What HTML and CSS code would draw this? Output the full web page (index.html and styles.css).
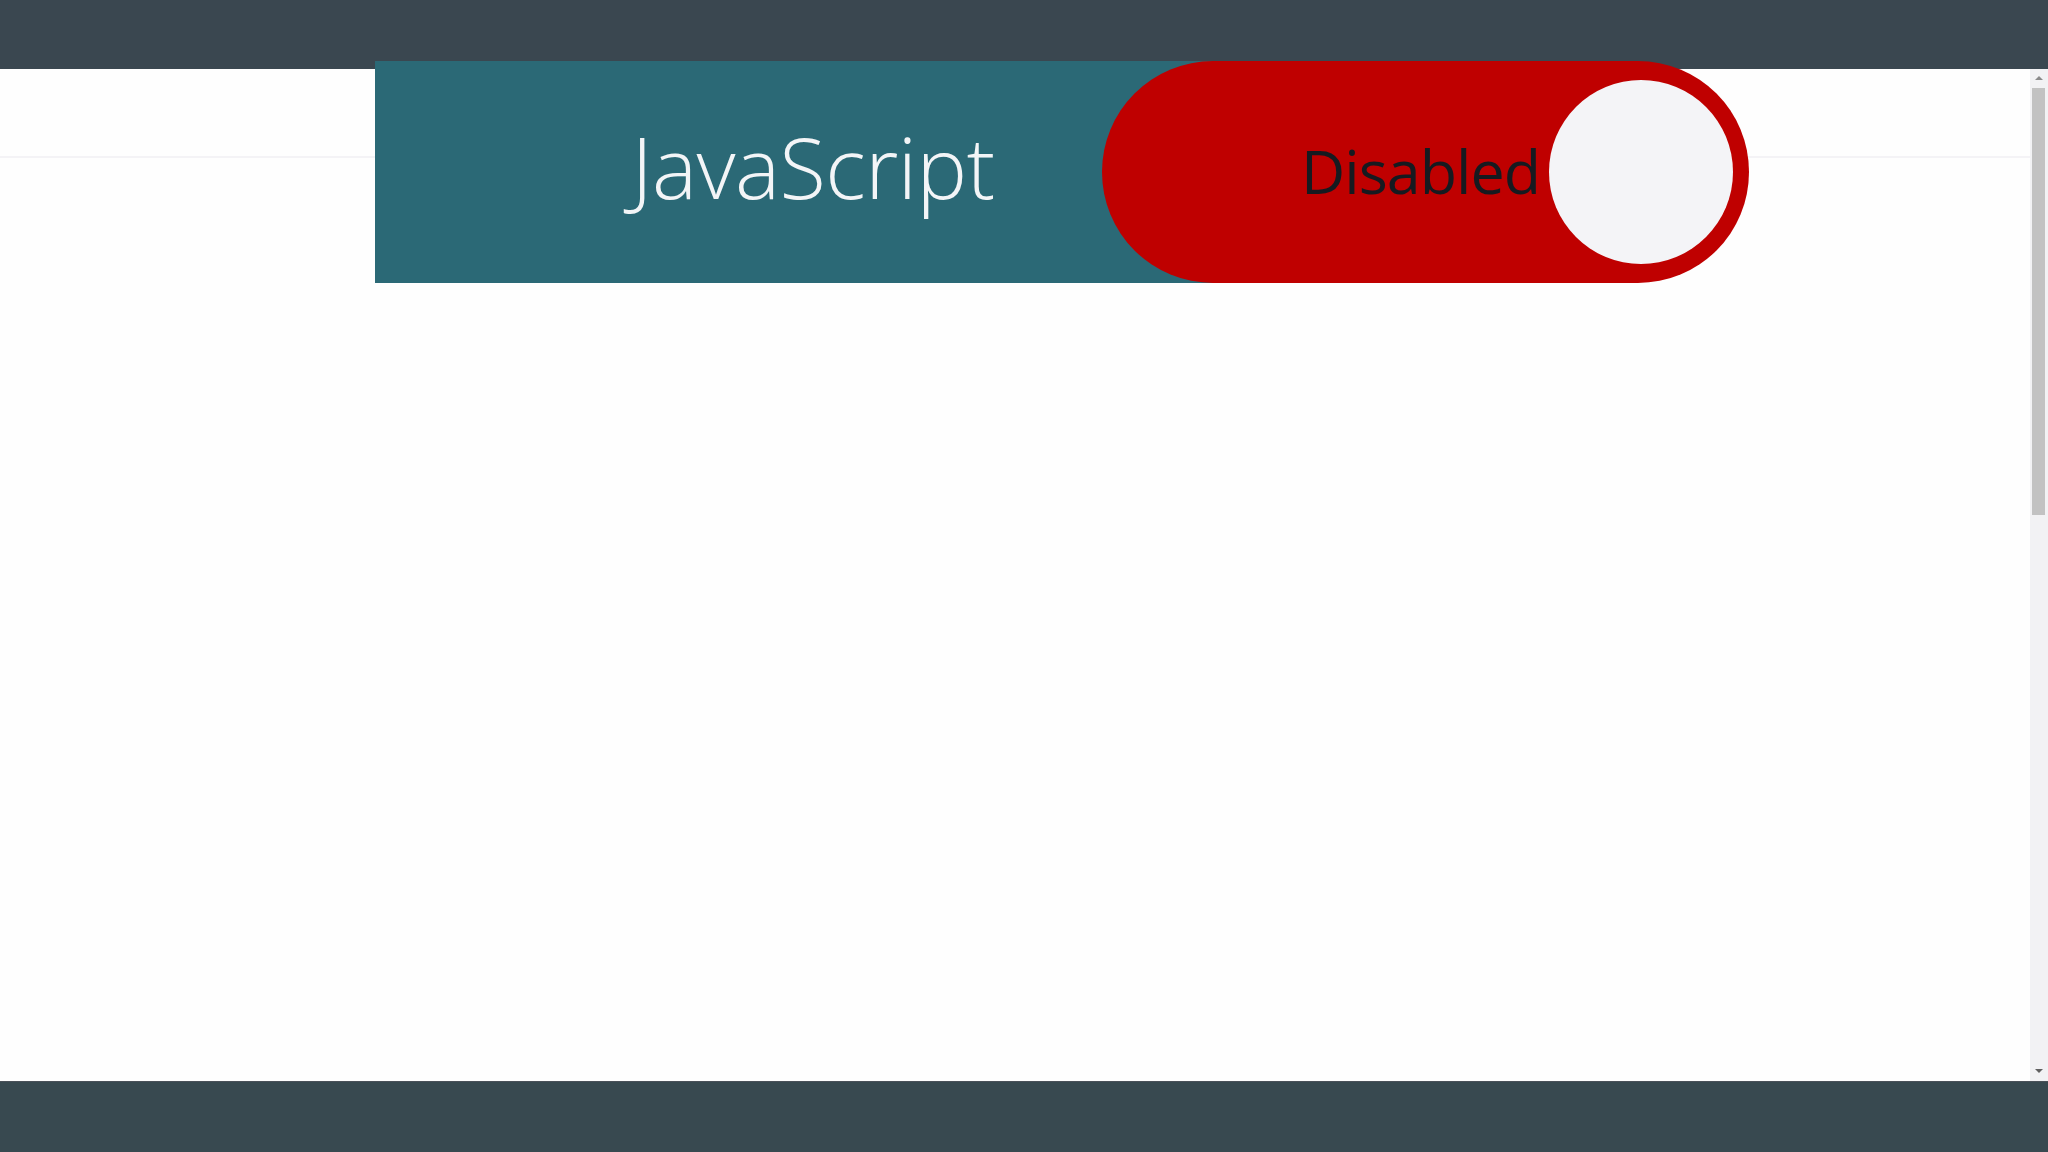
FILE: index.html
```html
<!DOCTYPE html>
<html lang="en">
<head>
    <meta charset="UTF-8">
    <meta name="viewport" content="width=device-width, initial-scale=1.0">
    <title>JavaScript Disabled</title>
    <link rel="stylesheet" href="styles.css">
</head>
<body>
    <header class="topbar"></header>

    <div class="page">
        <main class="content">
            <div class="subnav"></div>
        </main>
        <div class="scrollbar">
            <span class="arrow up"></span>
            <div class="track"><div class="thumb"></div></div>
            <span class="arrow down"></span>
        </div>
    </div>

    <footer class="bottombar"></footer>

    <!-- notice banner, sits over the header edge -->
    <div class="banner">
        <div class="label">JavaScript</div>
        <div class="toggle">
            <span class="state">Disabled</span>
            <span class="knob"></span>
        </div>
    </div>
</body>
</html>
```

FILE: styles.css
```css
html, body { height: 100%; }
body { margin: 0; display: flex; flex-direction: column; background: #fefefe; font-family: "Open Sans", "Noto Sans", sans-serif; overflow: hidden; }

.topbar { height: 69px; flex: none; background: #3a4750; }
.bottombar { height: 71px; flex: none; background: #384950; border-top: 1px solid #4a5159; box-sizing: border-box; }

.page { flex: 1; display: flex; min-height: 0; }
.content { flex: 1; }
.subnav { height: 87px; border-bottom: 2px solid #f4f3f6; }

.scrollbar { width: 18px; display: flex; flex-direction: column; align-items: center; background: #f2f2f4; }
.scrollbar .track { flex: 1; width: 100%; padding: 0 3px 0 2px; box-sizing: border-box; }
.scrollbar .thumb { height: 427px; background: #c2c2c2; }
.arrow { width: 0; height: 0; border-left: 4px solid transparent; border-right: 4px solid transparent; margin: 5px 0; }
.arrow.up { border-bottom: 4px solid #8a8a8a; margin-top: 7px; margin-bottom: 8px; }
.arrow.down { border-top: 4px solid #606060; margin-bottom: 8px; }

.banner { position: absolute; left: 375px; top: 61px; height: 222px; display: flex; }
.label { width: 870px; display: flex; align-items: center; justify-content: center; padding: 0 0 12px 6px; box-sizing: border-box; background: #2b6976; color: #f3f5f7; font-size: 85px; font-weight: 300; letter-spacing: -0.5px; }
.toggle { width: 647px; margin-left: -143px; display: flex; align-items: center; justify-content: flex-end; gap: 9px; padding-right: 16px; box-sizing: border-box; background: #bf0000; border-radius: 111px; }
.state { color: #161a20; font-size: 61px; letter-spacing: -1px; padding-bottom: 4px; }
.knob { width: 184px; height: 184px; border-radius: 50%; background: #f4f4f7; }
```
